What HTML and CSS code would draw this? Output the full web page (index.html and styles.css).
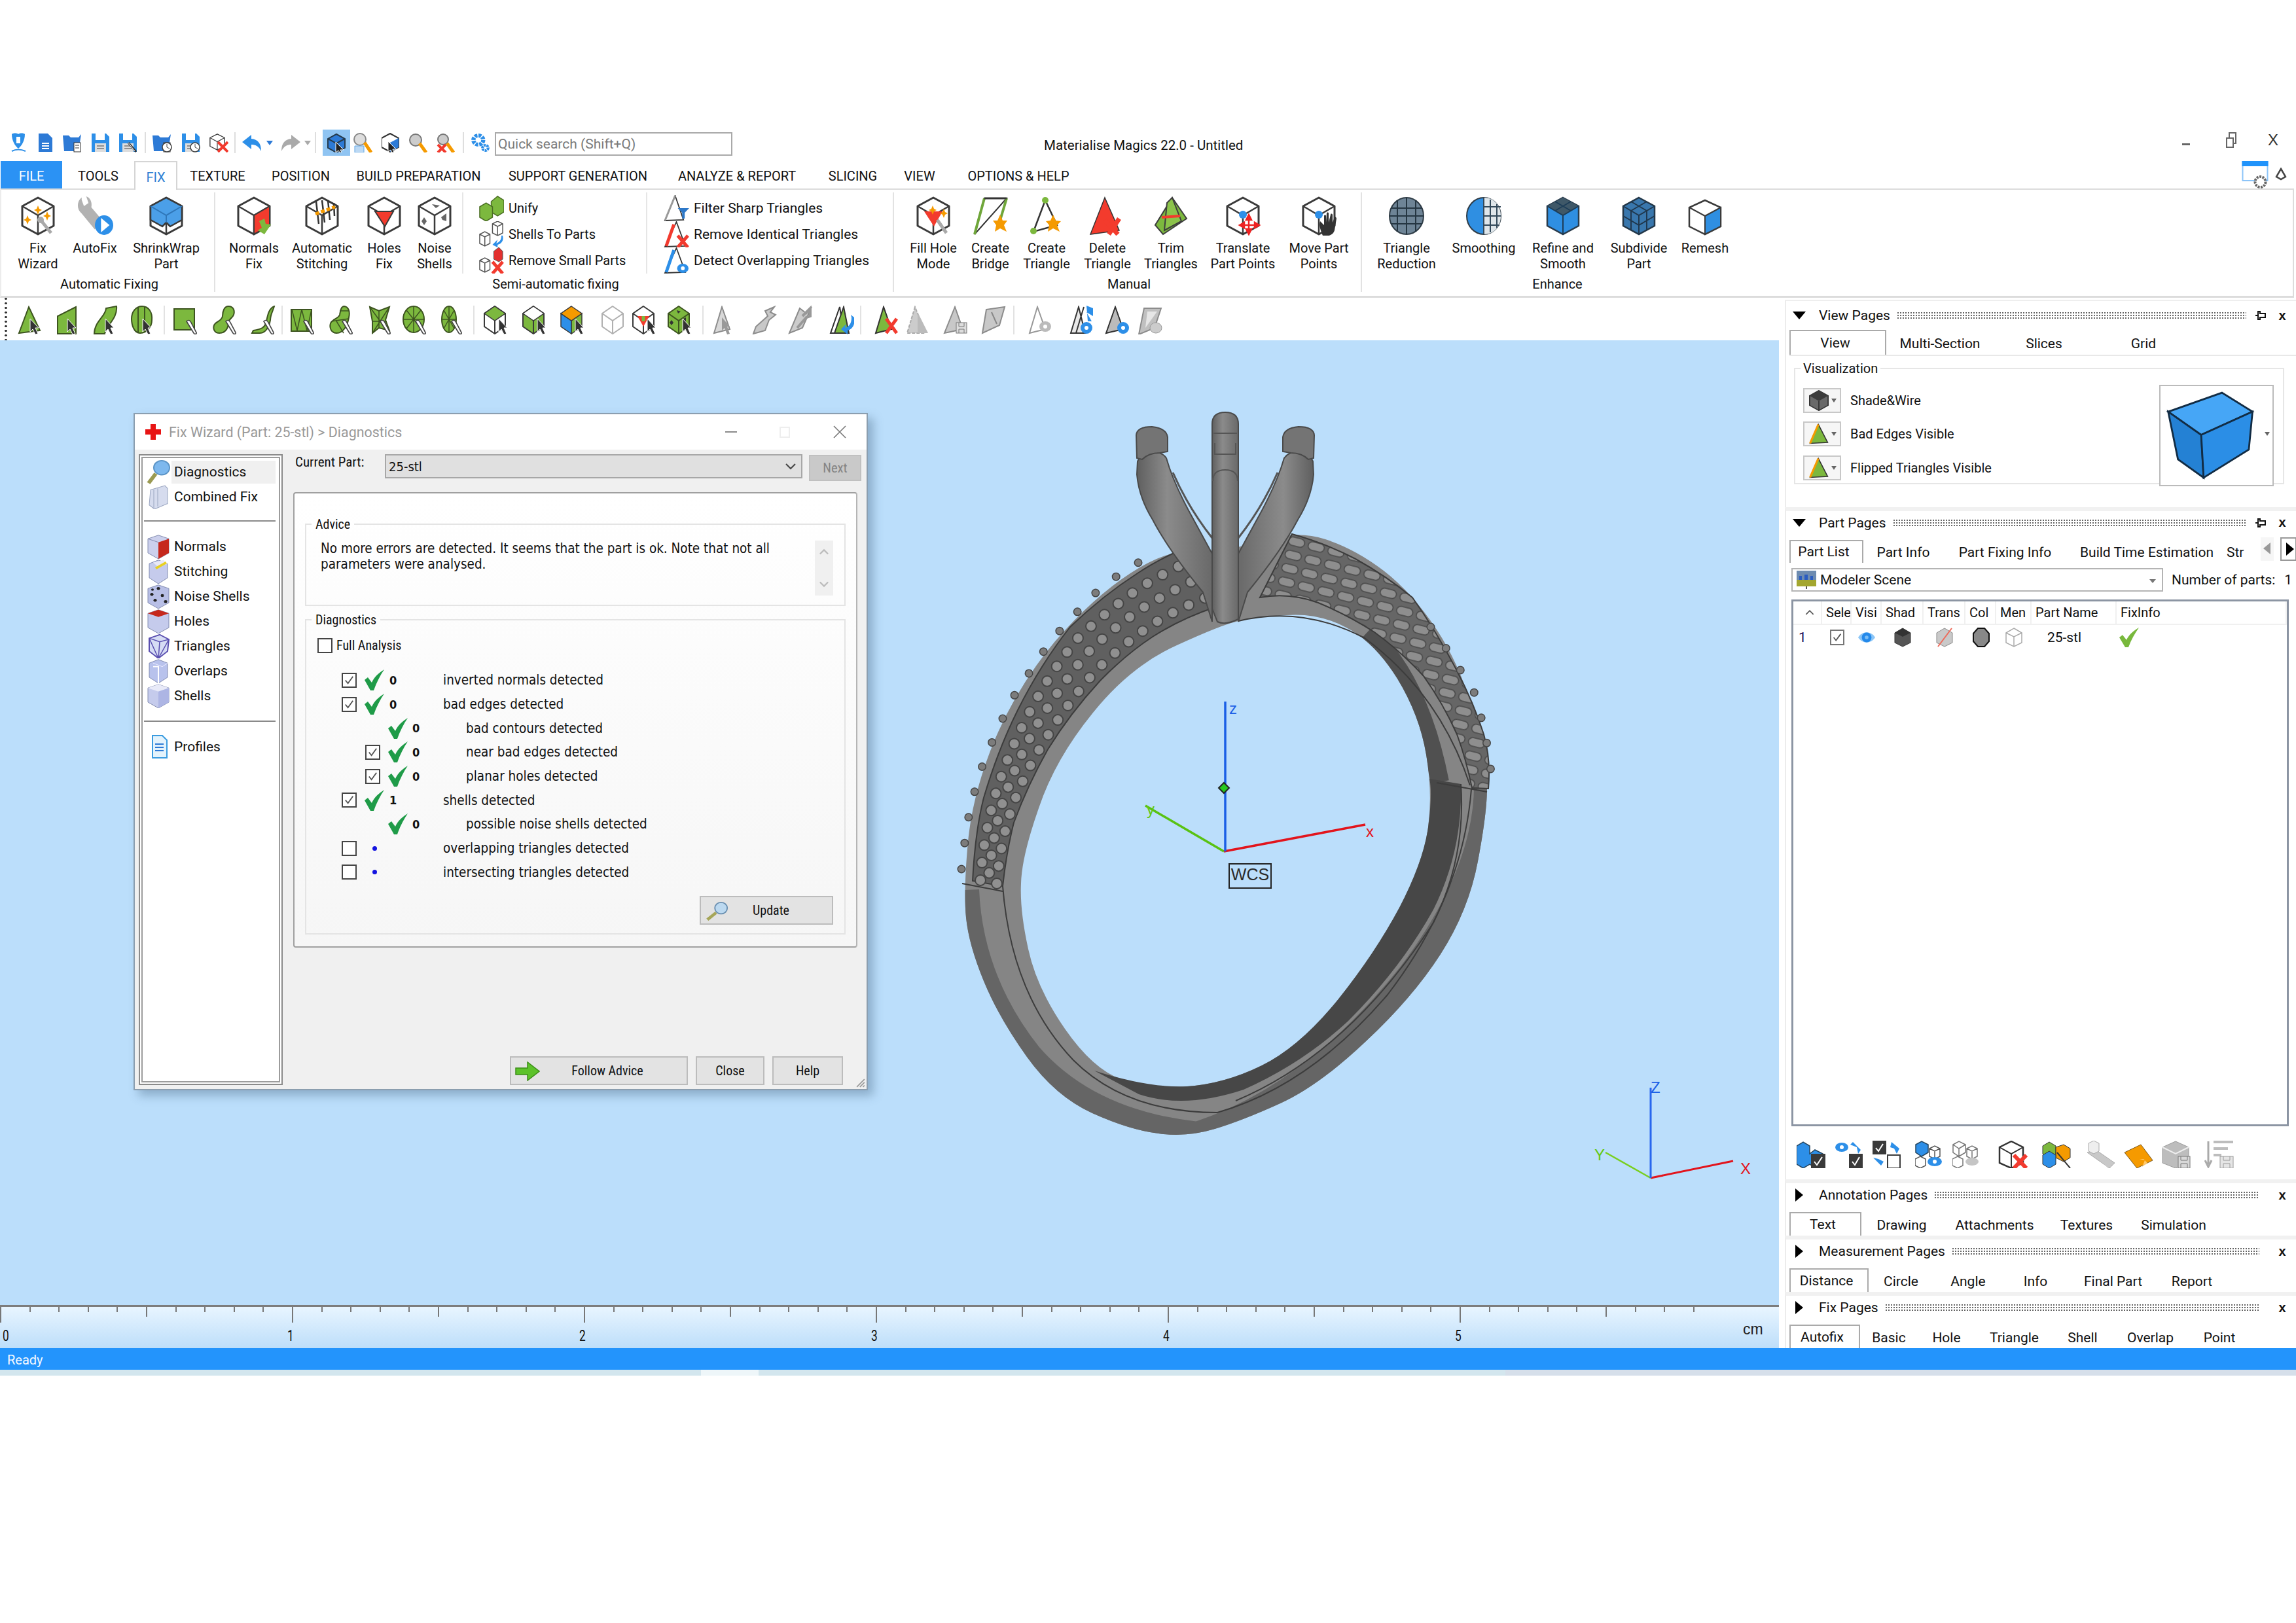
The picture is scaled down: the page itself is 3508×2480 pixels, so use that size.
FILE: index.html
```html
<!DOCTYPE html>
<html lang="en">
<head>
<meta charset="utf-8">
<title>Materialise Magics 22.0 - Untitled</title>
<link rel="stylesheet" href="styles.css">
</head>
<body>
<svg class="sprite" xmlns="http://www.w3.org/2000/svg">
<defs>
<g id="star"><path d="M0-7 2-2 6 0 2 2 0 7-2 2-6 0-2-2Z" fill="#f59a00"/></g>
<symbol id="cube" viewBox="0 0 56 60" preserveAspectRatio="none"><path d="M28 2 52 15V45L28 58 4 45V15Z" fill="#fff" stroke="#3a3a3a" stroke-width="3" stroke-linejoin="round"/><path d="M4 15 28 29 52 15M28 29V58" fill="none" stroke="#3a3a3a" stroke-width="2.5"/></symbol>
<symbol id="wrench" viewBox="0 0 56 60" preserveAspectRatio="none"><path d="M9 2C0 8 0 22 9 28L32 54 46 40 26 18C28 10 24 2 17 0L21 11 13 16 9 6Z" fill="#b2b2b2"/></symbol>
<symbol id="cursor" viewBox="0 0 38 44" preserveAspectRatio="none"><path d="M19 20 32 34 27 34 31 43 27 44 23 36 19 40Z" fill="#333" stroke="#fff" stroke-width="1"/></symbol>
<symbol id="pen" viewBox="0 0 38 44" preserveAspectRatio="none"><path d="M20 24C23 21 26 23 27 26L35 41C36 44 32 44 31 42Z" fill="#fff" stroke="#444" stroke-width="1.6"/></symbol>

<symbol id="b1" viewBox="0 0 56 60" preserveAspectRatio="none"><use href="#cube" width="56" height="60"/><use href="#star" transform="translate(28 21)"/><use href="#star" transform="translate(12 36)"/><use href="#star" transform="translate(42 30)"/><path d="M32 36 48 56" stroke="#a9a9a9" stroke-width="5"/><circle cx="32" cy="36" r="5" fill="#a9a9a9"/></symbol>
<symbol id="b2" viewBox="0 0 60 60" preserveAspectRatio="none"><use href="#wrench" width="52" height="56"/><ellipse cx="45" cy="44" rx="15" ry="15" fill="#2d8fe8"/><path d="M40 33 54 44 40 55Z" fill="#fff"/></symbol>
<symbol id="b3" viewBox="0 0 56 60" preserveAspectRatio="none"><use href="#cube" width="56" height="60"/><path d="M28 2 52 15V36L34 46 28 40 22 46 4 36V15Z" fill="#4b9fe8" stroke="#3a3a3a" stroke-width="2.5" stroke-linejoin="round"/><path d="M4 15 28 29 52 15M28 29V40" fill="none" stroke="#2f76b8" stroke-width="2"/></symbol>
<symbol id="b4" viewBox="0 0 56 60" preserveAspectRatio="none"><use href="#cube" width="56" height="60"/><path d="M28 29 52 15V45L28 58Z" fill="#f33b2d" stroke="#3a3a3a" stroke-width="2"/><path d="M36 38 44 34 46 42 54 43 44 58 34 52 40 48Z" fill="#7cb83e"/></symbol>
<symbol id="b5" viewBox="0 0 56 60" preserveAspectRatio="none"><use href="#cube" width="56" height="60"/><path d="M19 8 23 42M28 6 32 40M37 6 40 36M46 10 47 30" stroke="#333" stroke-width="2.5" fill="none"/><path d="M18 27 48 16" stroke="#f59a00" stroke-width="5" stroke-dasharray="6 3"/></symbol>
<symbol id="b6" viewBox="0 0 56 60" preserveAspectRatio="none"><use href="#cube" width="56" height="60"/><path d="M14 23 42 23 29 46Z" fill="#f33b2d" stroke="#3a3a3a" stroke-width="2"/></symbol>
<symbol id="b7" viewBox="0 0 56 60" preserveAspectRatio="none"><use href="#cube" width="56" height="60"/><path d="M24 12 36 14 30 18ZM38 32 46 26 46 38 40 36ZM12 32 16 38 12 44 8 38Z" fill="#666"/></symbol>
<symbol id="b8" viewBox="0 0 56 60" preserveAspectRatio="none"><use href="#cube" width="56" height="60"/><path d="M14 23 42 23 29 46Z" fill="#f33b2d"/><use href="#star" transform="translate(27 21)"/><use href="#star" transform="translate(44 26)"/><path d="M34 36 48 56" stroke="#a9a9a9" stroke-width="5"/></symbol>
<symbol id="b9" viewBox="0 0 56 60" preserveAspectRatio="none"><path d="M19 3 53 3 4 58Z" fill="#fff" stroke="#333" stroke-width="2"/><path d="M19 3 4 58M53 3 42 40" stroke="#6fa63a" stroke-width="4" fill="none"/><path d="M19 3H53" stroke="#333" stroke-width="3"/><path d="M43 28 47 37 54 37 49 44 53 54 43 49 35 54 37 44 32 37 39 37Z" fill="#f59a00"/></symbol>
<symbol id="b10" viewBox="0 0 56 60" preserveAspectRatio="none"><path d="M26 6 44 44 8 54Z" fill="#fff" stroke="#333" stroke-width="2.5"/><circle cx="26" cy="6" r="5" fill="#7cb83e"/><circle cx="8" cy="53" r="5" fill="#7cb83e"/><path d="M38 28 42 37 50 38 44 44 48 54 38 49 30 54 32 44 27 38 34 37Z" fill="#f59a00"/></symbol>
<symbol id="b11" viewBox="0 0 56 60" preserveAspectRatio="none"><path d="M24 2 46 52 2 58Z" fill="#f33b2d" stroke="#333" stroke-width="1.5"/><path d="M24 36 44 58M46 34 30 58" stroke="#f33b2d" stroke-width="7"/></symbol>
<symbol id="b12" viewBox="0 0 56 60" preserveAspectRatio="none"><path d="M30 2 52 34 16 58 4 44Z" fill="#7cb83e" stroke="#3d3d3d" stroke-width="2"/><path d="M22 10 30 2 44 38 18 52Z" fill="#8bc34a" stroke="#3d3d3d" stroke-width="2"/><path d="M14 32 42 30" stroke="#f33b2d" stroke-width="4"/></symbol>
<symbol id="b13" viewBox="0 0 56 60" preserveAspectRatio="none"><use href="#cube" width="56" height="60"/><ellipse cx="28" cy="28" rx="6" ry="6" fill="#2d8fe8"/><path d="M37 32V56M25 44H52M37 28 33 36H41ZM37 58 33 50H41ZM23 44 30 40V48ZM53 44 46 40V48Z" stroke="#e22" stroke-width="2.5" fill="#e22"/></symbol>
<symbol id="b14" viewBox="0 0 56 60" preserveAspectRatio="none"><use href="#cube" width="56" height="60"/><ellipse cx="28" cy="28" rx="6" ry="6" fill="#2d8fe8"/><path d="M34 60C30 50 28 44 30 38L36 44V30C36 28 39 28 39 30V40L40 26C40 24 43 24 43 26V40L46 28C46 26 49 26 49 29V40L52 32C53 31 55 32 55 34L52 52C50 60 40 62 34 60Z" fill="#333"/></symbol>
<symbol id="e1" viewBox="0 0 56 60" preserveAspectRatio="none"><ellipse cx="28" cy="30" rx="26" ry="28" fill="#6e8496" stroke="#2f3c46" stroke-width="2"/><path d="M4 18H52M2 30H54M4 42H52M14 6V54M28 2V58M42 6V54" stroke="#253642" stroke-width="2" fill="none"/></symbol>
<symbol id="e2" viewBox="0 0 56 60" preserveAspectRatio="none"><ellipse cx="28" cy="30" rx="26" ry="28" fill="#2f8fe2" stroke="#2f3c46" stroke-width="2"/><path d="M28 2C44 2 54 14 54 30S44 58 28 58Z" fill="#dfe6ea"/><path d="M28 16H54M28 30H54M28 44H52M38 5V55M48 12V48M28 2V58" stroke="#33495a" stroke-width="2" fill="none"/></symbol>
<symbol id="e3" viewBox="0 0 56 60" preserveAspectRatio="none"><path d="M28 2 52 15V45L28 58 4 45V15Z" fill="#2f8fe2" stroke="#2a3c4c" stroke-width="2.5"/><path d="M28 2 52 15 28 29 4 15Z" fill="#3f5868"/><path d="M4 15 28 29 52 15M28 29V58M16 8 40 22M40 8 16 22" stroke="#1d3d58" stroke-width="2" fill="none"/></symbol>
<symbol id="e4" viewBox="0 0 56 60" preserveAspectRatio="none"><path d="M28 2 52 15V45L28 58 4 45V15Z" fill="#3977ad" stroke="#233748" stroke-width="2.5"/><path d="M4 15 28 29 52 15M28 29V58M16 8 40 22M40 8 16 22M4 30 28 44 52 30M16 22V51M40 22V51" stroke="#20384e" stroke-width="2" fill="none"/></symbol>
<symbol id="e5" viewBox="0 0 56 60" preserveAspectRatio="none"><path d="M28 6 52 17V46L28 58 4 46V17Z" fill="#fff" stroke="#3a3a3a" stroke-width="2.5"/><path d="M28 30 52 17V46L28 58Z" fill="#2f8fe2" stroke="#3a3a3a" stroke-width="2"/><path d="M4 17 28 30" stroke="#3a3a3a" stroke-width="2"/></symbol>

<symbol id="s1" viewBox="0 0 40 40" preserveAspectRatio="none"><path d="M20 10 30 2 40 8V26L30 32 20 26Z" fill="#7cb83e" stroke="#4a6d24" stroke-width="1.5"/><path d="M2 18 12 12 22 18V34L12 40 2 34Z" fill="#7cb83e" stroke="#4a6d24" stroke-width="1.5"/></symbol>
<symbol id="s2" viewBox="0 0 40 40" preserveAspectRatio="none"><path d="M22 4 30 0 38 4V18L30 22 22 18ZM22 4 30 8 38 4M30 8V22" fill="#fff" stroke="#555" stroke-width="1.5"/><path d="M2 20 10 16 18 20V34L10 38 2 34ZM2 20 10 24 18 20M10 24V38" fill="#fff" stroke="#555" stroke-width="1.5"/><path d="M36 22C36 30 32 32 28 34L30 28 22 36 30 40V36C36 34 40 30 38 22Z" fill="#2d8fe8"/></symbol>
<symbol id="s3" viewBox="0 0 40 40" preserveAspectRatio="none"><path d="M2 20 10 16 18 20V34L10 38 2 34ZM2 20 10 24 18 20M10 24V38" fill="#fff" stroke="#555" stroke-width="1.5"/><path d="M24 6 32 0 38 6V18L32 22 24 18Z" fill="#e3302f" stroke="#555"/><path d="M22 22 38 40M38 22 22 40" stroke="#f23a2e" stroke-width="5"/></symbol>
<symbol id="s4" viewBox="0 0 40 40" preserveAspectRatio="none"><path d="M18 1 31 38 2 39Z" fill="#fff" stroke="#333" stroke-width="1.8"/><path d="M18 1 2 39" stroke="#999" stroke-width="3"/><path d="M22 20H40L33 27V36H29V27Z" fill="#2d78c8"/></symbol>
<symbol id="s5" viewBox="0 0 40 40" preserveAspectRatio="none"><path d="M20 1 34 38 2 39Z" fill="#fff" stroke="#333" stroke-width="1.8"/><path d="M16 5 4 38" stroke="#f23a2e" stroke-width="5"/><path d="M22 22 38 40M38 22 22 40" stroke="#f23a2e" stroke-width="5"/></symbol>
<symbol id="s6" viewBox="0 0 40 40" preserveAspectRatio="none"><path d="M20 1 34 38 2 39Z" fill="#fff" stroke="#333" stroke-width="1.8"/><path d="M16 4 4 38" stroke="#2d8fe8" stroke-width="5"/><ellipse cx="30" cy="32" rx="9" ry="7" fill="#2d8fe8"/><ellipse cx="30" cy="32" rx="3" ry="3" fill="#fff"/></symbol>

<symbol id="t1" viewBox="0 0 38 44" preserveAspectRatio="none"><path d="M17 2 2 42 34 38Z" fill="#7cb83e" stroke="#3d5420" stroke-width="2"/><use href="#cursor" width="38" height="44"/></symbol>
<symbol id="t2" viewBox="0 0 38 44" preserveAspectRatio="none"><path d="M32 2 4 16V43H32Z" fill="#7cb83e" stroke="#3d5420" stroke-width="2"/><use href="#cursor" width="38" height="44"/></symbol>
<symbol id="t3" viewBox="0 0 38 44" preserveAspectRatio="none"><path d="M36 1 20 4C20 16 2 24 2 43H18C20 30 38 20 36 1Z" fill="#7cb83e" stroke="#3d5420" stroke-width="2"/><use href="#cursor" width="38" height="44"/></symbol>
<symbol id="t4" viewBox="0 0 38 44" preserveAspectRatio="none"><path d="M18 1C28 1 34 10 33 22 33 34 24 42 15 42 6 42 2 30 2 20 2 9 9 1 18 1Z" fill="#7cb83e" stroke="#3d5420" stroke-width="2"/><path d="M12 3V42M22 2V41" stroke="#3d5420" stroke-width="2"/><use href="#cursor" width="38" height="44"/></symbol>
<symbol id="t5" viewBox="0 0 38 44" preserveAspectRatio="none"><rect x="1" y="5" width="31" height="32" fill="#7cb83e" stroke="#3d5420" stroke-width="2"/><use href="#pen" width="38" height="44"/></symbol>
<symbol id="t6" viewBox="0 0 38 44" preserveAspectRatio="none"><path d="M24 1C32 1 34 8 32 14 30 20 24 20 24 26 24 36 18 42 10 42 3 42 0 36 2 30 4 24 14 24 15 16 15 8 18 1 24 1Z" fill="#7cb83e" stroke="#3d5420" stroke-width="2"/><use href="#pen" width="38" height="44"/></symbol>
<symbol id="t7" viewBox="0 0 38 44" preserveAspectRatio="none"><path d="M36 1C28 4 26 14 24 24 22 34 16 36 4 38L2 42H14C22 42 28 34 30 22 30 14 34 8 36 1Z" fill="#7cb83e" stroke="#3d5420" stroke-width="2"/><use href="#pen" width="38" height="44"/></symbol>
<symbol id="t8" viewBox="0 0 38 44" preserveAspectRatio="none"><rect x="1" y="6" width="31" height="33" fill="#7cb83e" stroke="#3d5420" stroke-width="2"/><path d="M2 6 10 38 17 6 25 38 32 6" fill="none" stroke="#3d5420" stroke-width="1.5"/><use href="#pen" width="38" height="44"/></symbol>
<symbol id="t9" viewBox="0 0 38 44" preserveAspectRatio="none"><path d="M23 1C30 2 32 10 30 18 28 30 22 42 11 42 3 42 0 34 2 27 5 20 14 20 16 14 17 8 18 1 23 1Z" fill="#7cb83e" stroke="#3d5420" stroke-width="2"/><path d="M4 24 30 20M10 22 22 42M16 8 30 8" stroke="#3d5420" stroke-width="1.5"/><use href="#pen" width="38" height="44"/></symbol>
<symbol id="t10" viewBox="0 0 38 44" preserveAspectRatio="none"><path d="M4 2 18 8 34 2 28 22 34 38 18 34 8 42 8 24Z" fill="#7cb83e" stroke="#3d5420" stroke-width="2"/><path d="M4 2 30 38M34 2 8 42M18 8V34M8 24H30" stroke="#3d5420" stroke-width="1.5"/><use href="#pen" width="38" height="44"/></symbol>
<symbol id="t11" viewBox="0 0 38 44" preserveAspectRatio="none"><ellipse cx="17" cy="21" rx="16" ry="20" fill="#7cb83e" stroke="#3d5420" stroke-width="2"/><path d="M17 1V41M1 21H33M6 7 28 35M28 7 6 35" stroke="#3d5420" stroke-width="1.5"/><use href="#pen" width="38" height="44"/></symbol>
<symbol id="t12" viewBox="0 0 38 44" preserveAspectRatio="none"><ellipse cx="16" cy="21" rx="11" ry="20" fill="#7cb83e" stroke="#3d5420" stroke-width="2"/><path d="M16 1V41M5 21H27M8 7 24 35M24 7 8 35" stroke="#3d5420" stroke-width="1.5"/><use href="#pen" width="38" height="44"/></symbol>
<symbol id="c13" viewBox="0 0 34 44" preserveAspectRatio="none"><path d="M17 1 33 12V32L17 43 1 32V12Z" fill="#fff" stroke="#3a3a3a" stroke-width="2"/><path d="M17 1 33 12 17 23 1 12Z" fill="#7cb83e" stroke="#3a3a3a" stroke-width="1.5"/><path d="M17 23V43" stroke="#3a3a3a" stroke-width="2"/></symbol>
<symbol id="c14" viewBox="0 0 34 44" preserveAspectRatio="none"><path d="M17 1 33 12V32L17 43 1 32V12Z" fill="#7cb83e" stroke="#3a3a3a" stroke-width="2"/><path d="M17 1 33 12 17 23 1 12Z" fill="#fff" stroke="#3a3a3a" stroke-width="1.5"/><path d="M17 23V43" stroke="#3a3a3a" stroke-width="2"/></symbol>
<symbol id="c15" viewBox="0 0 34 44" preserveAspectRatio="none"><path d="M17 23 33 12V32L17 43Z" fill="#7cb83e" stroke="#3a3a3a" stroke-width="1.5"/><path d="M17 23 1 12V32L17 43Z" fill="#2d8fe8" stroke="#3a3a3a" stroke-width="1.5"/><path d="M17 1 33 12 17 23 1 12Z" fill="#f59a00" stroke="#3a3a3a" stroke-width="1.5"/></symbol>
<symbol id="c16" viewBox="0 0 34 44" preserveAspectRatio="none"><path d="M17 1 33 12V32L17 43 1 32V12ZM1 12 17 23 33 12M17 23V43" fill="#fff" stroke="#b0b0b0" stroke-width="2"/></symbol>
<symbol id="c17" viewBox="0 0 34 44" preserveAspectRatio="none"><path d="M17 1 33 12V32L17 43 1 32V12ZM1 12 17 23 33 12M17 23V43" fill="#fff" stroke="#3a3a3a" stroke-width="2"/><path d="M8 16H26L17 32Z" fill="#f33b2d"/><path d="M17 16V24" stroke="#7cb83e" stroke-width="5"/></symbol>
<symbol id="c18" viewBox="0 0 34 44" preserveAspectRatio="none"><path d="M17 1 33 12V32L17 43 1 32V12Z" fill="#7cb83e" stroke="#3d5420" stroke-width="2"/><path d="M1 12 17 23 33 12M17 23V43" fill="none" stroke="#3d5420" stroke-width="2"/><path d="M14 7 20 9 16 12ZM24 20 28 18V26ZM6 22 9 26 6 30 3 26Z" fill="#333"/></symbol>
<symbol id="g1" viewBox="0 0 38 44" preserveAspectRatio="none"><path d="M14 2 2 42 26 36Z" fill="#d8d8d8" stroke="#8c8c8c" stroke-width="2"/><path d="M14 18 26 32 22 32 26 43 22 44 18 34 14 38Z" fill="#999"/></symbol>
<symbol id="g2" viewBox="0 0 38 44" preserveAspectRatio="none"><path d="M34 2 20 8 24 16 6 32 2 43 20 38 26 22 36 14 28 10Z" fill="#c8c8c8" stroke="#8c8c8c" stroke-width="2"/></symbol>
<symbol id="g3" viewBox="0 0 38 44" preserveAspectRatio="none"><path d="M18 4 2 42 22 34 36 2 28 12Z" fill="#ccc" stroke="#8c8c8c" stroke-width="2"/><path d="M22 16 34 4 34 16 28 18 14 34" stroke="#999" stroke-width="4" fill="none"/></symbol>
<symbol id="g4" viewBox="0 0 38 44" preserveAspectRatio="none"><path d="M16 2 2 42H22Z" fill="#fff" stroke="#333" stroke-width="2"/><path d="M22 2 8 42H30Z" fill="#7cb83e" stroke="#333" stroke-width="2"/><path d="M34 18C34 28 30 32 24 34L26 28 18 36 28 44V38C36 36 40 28 38 18L33 14Z" fill="#2d8fe8"/></symbol>
<symbol id="g5" viewBox="0 0 38 44" preserveAspectRatio="none"><path d="M14 2 2 42 26 36Z" fill="#7cb83e" stroke="#333" stroke-width="2"/><path d="M18 20 34 42M34 20 18 42" stroke="#f23a2e" stroke-width="5"/></symbol>
<symbol id="g6" viewBox="0 0 38 44" preserveAspectRatio="none"><path d="M14 2 2 42H30Z" fill="#ccc" stroke="#aaa" stroke-width="2" stroke-dasharray="5 2"/><path d="M18 10 34 42H18Z" fill="#bbb"/></symbol>
<symbol id="g7" viewBox="0 0 38 44" preserveAspectRatio="none"><path d="M18 2 2 42 30 36Z" fill="#c8c8c8" stroke="#8c8c8c" stroke-width="2"/><rect x="20" y="26" width="16" height="16" fill="#ddd" stroke="#777"/><path d="M24 26V32H32V26M24 42V36H32V42" stroke="#777" fill="none"/></symbol>
<symbol id="g8" viewBox="0 0 38 44" preserveAspectRatio="none"><path d="M8 6 36 2 28 30 2 42Z" fill="#c8c8c8" stroke="#8c8c8c" stroke-width="2"/><path d="M16 10 24 28" stroke="#888" stroke-width="2"/></symbol>
<symbol id="g9" viewBox="0 0 38 44" preserveAspectRatio="none"><path d="M14 2 2 42 26 36Z" fill="#fff" stroke="#999" stroke-width="2"/><ellipse cx="26" cy="32" rx="9" ry="8" fill="#bbb"/><ellipse cx="26" cy="32" rx="3" ry="3" fill="#fff"/></symbol>
<symbol id="g10" viewBox="0 0 38 44" preserveAspectRatio="none"><path d="M14 2 2 42H24ZM22 2 10 42" fill="#e8e8e8" stroke="#333" stroke-width="2"/><path d="M26 0 36 4 36 16 26 10 34 24 28 24Z" fill="#2d8fe8"/><ellipse cx="26" cy="34" rx="9" ry="9" fill="#2d8fe8"/><ellipse cx="26" cy="34" rx="3" ry="3" fill="#fff"/></symbol>
<symbol id="g11" viewBox="0 0 38 44" preserveAspectRatio="none"><path d="M16 2 2 42 28 36Z" fill="#bbb" stroke="#333" stroke-width="2"/><ellipse cx="28" cy="34" rx="9" ry="9" fill="#2d8fe8"/><ellipse cx="28" cy="34" rx="3" ry="3" fill="#fff"/></symbol>
<symbol id="g12" viewBox="0 0 38 44" preserveAspectRatio="none"><path d="M10 4 36 4 26 34 2 44Z" fill="#c0c0c0" stroke="#8c8c8c" stroke-width="2"/><path d="M15 9H30L12 34Z" fill="#e6e6e6"/><ellipse cx="28" cy="34" rx="9" ry="8" fill="#ccc" stroke="#999"/></symbol>

<symbol id="q0" viewBox="0 0 26 30" preserveAspectRatio="none"><path d="M3 2C5 0 11 0 13 2 15 0 21 0 23 2 23 12 18 20 13 24 8 20 3 12 3 2Z" fill="#2d8fe8"/><path d="M10 6H16V16H10Z" fill="#fff"/><path d="M3 28C9 25 17 25 24 28" stroke="#2d8fe8" stroke-width="2" fill="none"/></symbol>
<symbol id="q1" viewBox="0 0 23 30" preserveAspectRatio="none"><path d="M1 1H15L22 8V29H1Z" fill="#2d7ad6"/><path d="M6 16H17M6 20H17M6 24H17" stroke="#fff" stroke-width="2"/></symbol>
<symbol id="q2" viewBox="0 0 30 30" preserveAspectRatio="none"><path d="M0 4H9L12 7H24L28 2 24 28H2Z" fill="#2d7ad6"/><rect x="17" y="15" width="10" height="14" fill="#fff" stroke="#333"/><path d="M19 19H25M19 23H25" stroke="#333"/></symbol>
<symbol id="q3" viewBox="0 0 30 30" preserveAspectRatio="none"><path d="M2 1H24L29 6V29H2Z" fill="#2d8fe8"/><rect x="8" y="1" width="14" height="10" fill="#fff"/><rect x="7" y="16" width="17" height="13" fill="#ddd"/><path d="M10 20H21M10 24H21" stroke="#777" stroke-width="1.5"/></symbol>
<symbol id="q4" viewBox="0 0 30 30" preserveAspectRatio="none"><use href="#q3" width="30" height="30"/><path d="M16 15 28 29" stroke="#333" stroke-width="3"/><path d="M16 15 26 28" stroke="#fff" stroke-width="1"/></symbol>
<symbol id="q5" viewBox="0 0 30 30" preserveAspectRatio="none"><use href="#q2" width="30" height="30"/><circle cx="22" cy="22" r="7" fill="#fff" stroke="#444" stroke-width="1.6"/><path d="M22 17V22L26 24" stroke="#444" fill="none"/></symbol>
<symbol id="q6" viewBox="0 0 30 30" preserveAspectRatio="none"><use href="#q3" width="30" height="30"/><circle cx="22" cy="22" r="7" fill="#fff" stroke="#444" stroke-width="1.6"/><path d="M22 17V22L26 24" stroke="#444" fill="none"/></symbol>
<symbol id="q7" viewBox="0 0 30 30" preserveAspectRatio="none"><use href="#cube" width="26" height="26" y="1"/><path d="M14 14 29 29M29 14 14 29" stroke="#f23a2e" stroke-width="4"/></symbol>
<symbol id="undo" viewBox="0 0 30 30" preserveAspectRatio="none"><path d="M14 3 0 14 14 25V18C20 18 25 20 29 28 29 16 24 10 14 9Z" fill="#2d8fe8"/></symbol>
<symbol id="redo" viewBox="0 0 30 30" preserveAspectRatio="none"><path d="M16 3 30 14 16 25V18C10 18 5 20 1 28 1 16 6 10 16 9Z" fill="#aaa"/></symbol>
<symbol id="q8" viewBox="0 0 30 30" preserveAspectRatio="none"><path d="M15 2 28 9V23L15 30 2 23V9Z" fill="#2d7ad6" stroke="#263b4d" stroke-width="2"/><path d="M2 9 15 16 28 9M15 16V30" fill="none" stroke="#263b4d" stroke-width="2"/><path d="M14 14 26 26 21 26 23 30 20 30 18 27 14 30Z" fill="#222" stroke="#fff"/></symbol>
<symbol id="q9" viewBox="0 0 30 30" preserveAspectRatio="none"><circle cx="10" cy="10" r="9" fill="#ddd" stroke="#888" stroke-width="2"/><path d="M17 15 27 30" stroke="#f59a00" stroke-width="5"/><path d="M2 20H16V30H2Z" fill="#bcd9f4" stroke="#5ea6e5"/></symbol>
<symbol id="q10" viewBox="0 0 30 30" preserveAspectRatio="none"><path d="M13 1 26 8V22L13 29 0 22V8Z" fill="#fff" stroke="#333" stroke-width="2"/><path d="M13 15 26 8V22L13 29Z" fill="#2d7ad6"/><path d="M10 13 22 25 17 25 19 30 16 30 14 26 10 29Z" fill="#222" stroke="#fff"/></symbol>
<symbol id="q11" viewBox="0 0 30 30" preserveAspectRatio="none"><circle cx="11" cy="11" r="9" fill="#ccc" stroke="#777" stroke-width="2"/><path d="M17 16 27 30" stroke="#f59a00" stroke-width="5"/></symbol>
<symbol id="q12" viewBox="0 0 30 30" preserveAspectRatio="none"><circle cx="11" cy="10" r="8" fill="#ccc" stroke="#777" stroke-width="2"/><path d="M17 16 27 30" stroke="#f59a00" stroke-width="5"/><path d="M3 18 15 30M15 18 3 30" stroke="#f23a2e" stroke-width="4"/></symbol>
<symbol id="gears" viewBox="0 0 28 30" preserveAspectRatio="none"><circle cx="11" cy="11" r="7" fill="none" stroke="#2d8fe8" stroke-width="6" stroke-dasharray="4 1.5"/><circle cx="21" cy="23" r="4" fill="none" stroke="#2d8fe8" stroke-width="4" stroke-dasharray="3 1"/></symbol>

<symbol id="tick" viewBox="0 0 30 32" preserveAspectRatio="none"><path d="M0 16 5 12 11 20C15 11 22 5 30 0 24 9 18 20 14 32H9Z" fill="#1f9b48"/></symbol>
<symbol id="tick2" viewBox="0 0 30 32" preserveAspectRatio="none"><path d="M0 16 5 12 11 20C15 11 22 5 30 0 24 9 18 20 14 32H9Z" fill="#78b83c"/></symbol>
<symbol id="mark" viewBox="0 0 20 20"><path d="M4 10 8 15 16 4" fill="none" stroke="#555" stroke-width="2"/></symbol>

<symbol id="d-diag" viewBox="0 0 36 42" preserveAspectRatio="none"><circle cx="23" cy="14" r="12" fill="#7db8ee" stroke="#5b94c6" stroke-width="2"/><path d="M14 24 3 40" stroke="#9a9a52" stroke-width="6"/></symbol>
<symbol id="d-comb" viewBox="0 0 36 36" preserveAspectRatio="none"><path d="M6 8 28 2 32 6V28L12 36 4 30Z" fill="#d6dcee" stroke="#9aa5c0"/><path d="M11 8V34M17 6V32" stroke="#9aa5c0"/></symbol>
<symbol id="d-norm" viewBox="0 0 36 42" preserveAspectRatio="none"><path d="M2 8 18 2 34 8V32L18 42 2 32Z" fill="#ccd0ec" stroke="#7e88ad"/><path d="M18 14 34 8V32L18 42Z" fill="#c6281c"/><path d="M2 8 18 14" stroke="#7e88ad"/></symbol>
<symbol id="d-stit" viewBox="0 0 36 42" preserveAspectRatio="none"><path d="M4 8 18 2 32 8V32L18 42 4 32Z" fill="#c5cbec" stroke="#7e88ad"/><path d="M10 6 26 2 32 8 18 14Z" fill="#e8e8f6"/><path d="M14 16 30 6" stroke="#e8d020" stroke-width="4"/></symbol>
<symbol id="d-nois" viewBox="0 0 36 42" preserveAspectRatio="none"><path d="M2 8 18 2 34 8V32L18 42 2 32Z" fill="#b8bfe6" stroke="#7e88ad"/><g fill="#222"><circle cx="18" cy="8" r="2.5"/><circle cx="8" cy="18" r="2.5"/><circle cx="13" cy="28" r="2.5"/><circle cx="24" cy="20" r="2.5"/><circle cx="29" cy="30" r="2.5"/><circle cx="9" cy="10" r="2"/></g></symbol>
<symbol id="d-hole" viewBox="0 0 36 42" preserveAspectRatio="none"><path d="M2 8 18 2 34 8V32L18 42 2 32Z" fill="#c5cbec" stroke="#7e88ad"/><path d="M2 8 18 2 34 8 18 14Z" fill="#c6281c"/></symbol>
<symbol id="d-tri" viewBox="0 0 36 42" preserveAspectRatio="none"><path d="M4 8 20 2 34 10 32 30 18 42 4 30Z" fill="#d6dcf4" stroke="#5a4fb0" stroke-width="2"/><path d="M4 8 18 42 20 14M34 10 18 42M4 8 20 14 34 10" fill="none" stroke="#5a4fb0" stroke-width="1.5"/></symbol>
<symbol id="d-over" viewBox="0 0 36 42" preserveAspectRatio="none"><path d="M4 8 18 2 32 8V32L18 42 4 32Z" fill="#b8c2ec" stroke="#7e88ad"/><path d="M10 8 24 14 32 8" fill="none" stroke="#eef"/><path d="M10 14H18V42" fill="none" stroke="#fff" stroke-width="2"/></symbol>
<symbol id="d-shel" viewBox="0 0 36 42" preserveAspectRatio="none"><path d="M2 8 18 2 34 8V32L18 42 2 32Z" fill="#c5cbec" stroke="#7e88ad"/><path d="M2 8 18 14 34 8 18 2Z" fill="#e8eaf8"/><path d="M18 14 34 8V32L18 42Z" fill="#adb5e4"/></symbol>
<symbol id="d-prof" viewBox="0 0 24 36" preserveAspectRatio="none"><path d="M1 1H16L23 8V35H1Z" fill="#e4f3fc" stroke="#3b9ce0" stroke-width="2"/><path d="M5 14H18M5 19H18M5 24H18" stroke="#2d7ad6" stroke-width="2"/></symbol>
<symbol id="d-arrow" viewBox="0 0 38 30" preserveAspectRatio="none"><path d="M1 10H19V1L37 15 19 29V20H1Z" fill="#5cc22a" stroke="#3b8f17" stroke-width="1.5"/></symbol>
<symbol id="d-mag" viewBox="0 0 40 34" preserveAspectRatio="none"><circle cx="26" cy="12" r="10" fill="#bcd9f0" stroke="#6a8fb0" stroke-width="2"/><path d="M18 20 4 32" stroke="#a6a659" stroke-width="5"/></symbol>

<symbol id="v1" viewBox="0 0 34 44" preserveAspectRatio="none"><path d="M17 1 33 12V32L17 43 1 32V12Z" fill="#6a6a6a" stroke="#333" stroke-width="2"/><path d="M17 1 33 12 17 23 1 12Z" fill="#3c3c3c"/><path d="M17 23V43" stroke="#333" stroke-width="2"/></symbol>
<symbol id="v2" viewBox="0 0 38 44" preserveAspectRatio="none"><path d="M18 2 2 42 36 40Z" fill="#7cb83e" stroke="#333" stroke-width="2"/><path d="M18 2 2 42" stroke="#f59a00" stroke-width="4"/></symbol>

<symbol id="p1" viewBox="0 0 45 42" preserveAspectRatio="none"><path d="M0 8 10 2 20 8V20L28 14 40 20V36L30 42 20 36 10 42 0 36Z" fill="#2d8fe8" stroke="#26465f" stroke-width="1.5"/><rect x="22" y="20" width="22" height="22" fill="#3a3a3a"/><path d="M27 32 31 37 39 25" fill="none" stroke="#fff" stroke-width="2"/></symbol>
<symbol id="p2" viewBox="0 0 45 42" preserveAspectRatio="none"><ellipse cx="11" cy="10" rx="10" ry="7" fill="#2d8fe8"/><circle cx="11" cy="10" r="3" fill="#fff"/><path d="M28 2 40 14 36 20 34 10 24 6Z" fill="#2d8fe8"/><rect x="22" y="20" width="21" height="22" fill="#3a3a3a"/><path d="M27 32 31 37 38 25" fill="none" stroke="#fff" stroke-width="2"/></symbol>
<symbol id="p3" viewBox="0 0 45 42" preserveAspectRatio="none"><rect x="1" y="0" width="21" height="21" fill="#3a3a3a"/><path d="M6 11 10 16 17 5" fill="none" stroke="#fff" stroke-width="2"/><path d="M30 2 42 12 38 20 34 12 28 10Z" fill="#2d8fe8"/><path d="M2 26 14 38 18 32 10 28Z" fill="#2d8fe8"/><rect x="24" y="22" width="19" height="20" fill="#fff" stroke="#3a3a3a" stroke-width="2"/></symbol>
<symbol id="p4" viewBox="0 0 45 42" preserveAspectRatio="none"><path d="M22 12 30 8 38 12V24L30 28 22 24ZM22 12 30 16 38 12M30 16V28M0 28 8 24 16 28V38L8 42 0 38Z" fill="#fff" stroke="#555" stroke-width="1.5"/><path d="M1 6 10 1 20 6V18L10 24 1 18Z" fill="#2d8fe8" stroke="#26465f" stroke-width="1.5"/><ellipse cx="30" cy="32" rx="11" ry="7" fill="#2d8fe8"/><circle cx="30" cy="32" r="3" fill="#fff"/></symbol>
<symbol id="p5" viewBox="0 0 45 42" preserveAspectRatio="none"><path d="M22 12 30 8 38 12V24L30 28 22 24ZM22 12 30 16 38 12M30 16V28M0 28 8 24 16 28V38L8 42 0 38ZM1 6 10 1 20 6V18L10 24 1 18ZM1 6 10 12 20 6M10 12V24" fill="#fff" stroke="#777" stroke-width="1.5"/><ellipse cx="30" cy="32" rx="10" ry="6" fill="#c5c5c5"/></symbol>
<symbol id="p6" viewBox="0 0 45 42" preserveAspectRatio="none"><path d="M20 1 38 10V34L20 42 2 34V10Z" fill="#fff" stroke="#333" stroke-width="2.5"/><path d="M2 10 20 20 38 10M20 20V42" fill="none" stroke="#333" stroke-width="2"/><path d="M24 22 43 42M43 22 24 42" stroke="#f23a2e" stroke-width="6"/></symbol>
<symbol id="p7" viewBox="0 0 45 42" preserveAspectRatio="none"><path d="M2 8 12 2 22 8V20L12 26 2 20Z" fill="#7cb83e" stroke="#333"/><path d="M22 10 34 6 44 12V26L34 32 22 26Z" fill="#f59a00" stroke="#333"/><path d="M2 22 12 16 22 22V36L12 42 2 36Z" fill="#2d8fe8" stroke="#333"/><path d="M24 18 44 42" stroke="#333" stroke-width="2"/></symbol>
<symbol id="p8" viewBox="0 0 45 42" preserveAspectRatio="none"><path d="M18 16 44 34 36 42 2 18Z" fill="#c8c8c8" stroke="#aaa"/><path d="M4 4 12 0 20 4V16L12 20 4 16Z" fill="#eee" stroke="#aaa"/><path d="M26 34 34 28V42Z" fill="#c8c8c8"/></symbol>
<symbol id="p9" viewBox="0 0 45 42" preserveAspectRatio="none"><path d="M1 18 26 6 44 30 20 42Z" fill="#f59a00" stroke="#7a5a20"/><path d="M24 28 32 30 28 40 36 34 30 28" fill="#ffc96b"/></symbol>
<symbol id="p10" viewBox="0 0 45 42" preserveAspectRatio="none"><path d="M22 1 42 10V34L22 42 2 34V10Z" fill="#bdbdbd" stroke="#999"/><path d="M2 10 22 20 42 10" fill="none" stroke="#eee" stroke-width="2"/><rect x="26" y="24" width="18" height="18" fill="#d8d8d8" stroke="#777"/><path d="M30 24V30H40V24M30 42V35H40V42" fill="none" stroke="#777"/></symbol>
<symbol id="p11" viewBox="0 0 45 42" preserveAspectRatio="none"><path d="M6 1V36M1 30 6 40 11 30" fill="none" stroke="#aaa" stroke-width="3"/><path d="M14 2H44M14 12H36M14 22H26" stroke="#bdbdbd" stroke-width="4"/><rect x="24" y="24" width="20" height="18" fill="#e5e5e5" stroke="#999"/><path d="M29 24V30H39V24M29 42V35H39V42" fill="none" stroke="#999"/></symbol>
</defs>
</svg>

<div class="app">
  <div class="titlebar">
    <div class="qat">
      <span class="qi"><svg class="ic"><use href="#q0"/></svg></span>
      <span class="qi"><svg class="ic"><use href="#q1"/></svg></span>
      <span class="qi"><svg class="ic"><use href="#q2"/></svg></span>
      <span class="qi"><svg class="ic"><use href="#q3"/></svg></span>
      <span class="qi sep"><svg class="ic"><use href="#q4"/></svg></span>
      <span class="qi"><svg class="ic"><use href="#q5"/></svg></span>
      <span class="qi"><svg class="ic"><use href="#q6"/></svg></span>
      <span class="qi sep"><svg class="ic"><use href="#q7"/></svg></span>
      <span class="qi"><svg class="ic"><use href="#undo"/></svg></span>
      <span class="qi"><span class="dd dd-blue"></span></span>
      <span class="qi"><svg class="ic"><use href="#redo"/></svg></span>
      <span class="qi sep"><span class="dd"></span></span>
      <span class="qi"><span class="hot"><svg class="ic"><use href="#q8"/></svg></span></span>
      <span class="qi"><svg class="ic"><use href="#q9"/></svg></span>
      <span class="qi"><svg class="ic"><use href="#q10"/></svg></span>
      <span class="qi"><svg class="ic"><use href="#q11"/></svg></span>
      <span class="qi sep"><svg class="ic"><use href="#q12"/></svg></span>
      <span class="qi"><svg class="ic"><use href="#gears"/></svg></span>
      <span class="search">Quick search (Shift+Q)</span>
    </div>
    <div class="apptitle">Materialise Magics 22.0 - Untitled</div>
    <div class="winbtns"><span class="w-min"></span><span class="w-res"><i></i><b></b></span><span class="w-x">X</span></div>
  </div>

  <div class="tabs">
    <span class="tab file">FILE</span><span class="tab">TOOLS</span><span class="tab active">FIX</span><span class="tab">TEXTURE</span><span class="tab">POSITION</span><span class="tab">BUILD PREPARATION</span><span class="tab">SUPPORT GENERATION</span><span class="tab">ANALYZE &amp; REPORT</span><span class="tab">SLICING</span><span class="tab">VIEW</span><span class="tab">OPTIONS &amp; HELP</span>
    <span class="tabtools">
      <span class="winset"><svg viewBox="0 0 40 44"><path d="M1 1H39V30H1Z" fill="#fff" stroke="#8cc4f8" stroke-width="2"/><rect width="40" height="8" fill="#2093fb"/><circle cx="28" cy="32" r="8" fill="#fff" stroke="#666" stroke-width="4" stroke-dasharray="3 1.5"/></svg></span>
      <svg class="collapse" viewBox="0 0 18 20"><path d="M9 2 16 14 9 18 2 14Z" fill="none" stroke="#444" stroke-width="2.5"/></svg>
    </span>
  </div>

  <div class="ribbon">
    <section class="rg g1">
      <div class="rg-body bigs">
        <div class="big"><svg class="bi"><use href="#b1"/></svg><span>Fix<br>Wizard</span></div>
        <div class="big"><svg class="bi"><use href="#b2"/></svg><span>AutoFix</span></div>
        <div class="big"><svg class="bi"><use href="#b3"/></svg><span>ShrinkWrap<br>Part</span></div>
      </div>
      <div class="rg-label">Automatic Fixing</div>
    </section>
    <section class="rg g2">
      <div class="rg-body">
        <div class="bigs g2b">
          <div class="big"><svg class="bi"><use href="#b4"/></svg><span>Normals<br>Fix</span></div>
          <div class="big"><svg class="bi"><use href="#b5"/></svg><span>Automatic<br>Stitching</span></div>
          <div class="big"><svg class="bi"><use href="#b6"/></svg><span>Holes<br>Fix</span></div>
          <div class="big"><svg class="bi"><use href="#b7"/></svg><span>Noise<br>Shells</span></div>
        </div>
        <div class="smalls s-a">
          <div class="small"><svg class="si"><use href="#s1"/></svg>Unify</div>
          <div class="small"><svg class="si"><use href="#s2"/></svg>Shells To Parts</div>
          <div class="small"><svg class="si"><use href="#s3"/></svg>Remove Small Parts</div>
        </div>
        <div class="smalls s-b">
          <div class="small"><svg class="si"><use href="#s4"/></svg>Filter Sharp Triangles</div>
          <div class="small"><svg class="si"><use href="#s5"/></svg>Remove Identical Triangles</div>
          <div class="small"><svg class="si"><use href="#s6"/></svg>Detect Overlapping Triangles</div>
        </div>
      </div>
      <div class="rg-label">Semi-automatic fixing</div>
    </section>
    <section class="rg g3">
      <div class="rg-body bigs">
        <div class="big"><svg class="bi"><use href="#b8"/></svg><span>Fill Hole<br>Mode</span></div>
        <div class="big"><svg class="bi"><use href="#b9"/></svg><span>Create<br>Bridge</span></div>
        <div class="big"><svg class="bi"><use href="#b10"/></svg><span>Create<br>Triangle</span></div>
        <div class="big"><svg class="bi"><use href="#b11"/></svg><span>Delete<br>Triangle</span></div>
        <div class="big"><svg class="bi"><use href="#b12"/></svg><span>Trim<br>Triangles</span></div>
        <div class="big"><svg class="bi"><use href="#b13"/></svg><span>Translate<br>Part Points</span></div>
        <div class="big"><svg class="bi"><use href="#b14"/></svg><span>Move Part<br>Points</span></div>
      </div>
      <div class="rg-label">Manual</div>
    </section>
    <section class="rg g4">
      <div class="rg-body bigs">
        <div class="big"><svg class="bi"><use href="#e1"/></svg><span>Triangle<br>Reduction</span></div>
        <div class="big"><svg class="bi"><use href="#e2"/></svg><span>Smoothing</span></div>
        <div class="big"><svg class="bi"><use href="#e3"/></svg><span>Refine and<br>Smooth</span></div>
        <div class="big"><svg class="bi"><use href="#e4"/></svg><span>Subdivide<br>Part</span></div>
        <div class="big"><svg class="bi"><use href="#e5"/></svg><span>Remesh</span></div>
      </div>
      <div class="rg-label">Enhance</div>
    </section>
  </div>

  <div class="main">
    <div class="center">
      <div class="toolbar">
        <svg class="ti"><use href="#t1"/></svg><svg class="ti"><use href="#t2"/></svg><svg class="ti"><use href="#t3"/></svg><svg class="ti"><use href="#t4"/></svg><svg class="ti"><use href="#t5"/></svg><svg class="ti"><use href="#t6"/></svg><svg class="ti"><use href="#t7"/></svg><svg class="ti"><use href="#t8"/></svg><svg class="ti"><use href="#t9"/></svg><svg class="ti"><use href="#t10"/></svg><svg class="ti"><use href="#t11"/></svg><svg class="ti"><use href="#t12"/></svg>
        <span class="tc"><svg class="ti"><use href="#c13"/></svg><svg class="ti"><use href="#cursor"/></svg></span><span class="tc"><svg class="ti"><use href="#c14"/></svg><svg class="ti"><use href="#cursor"/></svg></span><span class="tc"><svg class="ti"><use href="#c15"/></svg><svg class="ti"><use href="#cursor"/></svg></span><span class="tc"><svg class="ti"><use href="#c16"/></svg></span><span class="tc"><svg class="ti"><use href="#c17"/></svg><svg class="ti"><use href="#cursor"/></svg></span><span class="tc"><svg class="ti"><use href="#c18"/></svg><svg class="ti"><use href="#cursor"/></svg></span>
        <svg class="ti"><use href="#g1"/></svg><svg class="ti"><use href="#g2"/></svg><svg class="ti"><use href="#g3"/></svg><svg class="ti"><use href="#g4"/></svg><svg class="ti"><use href="#g5"/></svg><svg class="ti"><use href="#g6"/></svg><svg class="ti"><use href="#g7"/></svg><svg class="ti"><use href="#g8"/></svg><svg class="ti"><use href="#g9"/></svg><svg class="ti"><use href="#g10"/></svg><svg class="ti"><use href="#g11"/></svg><svg class="ti"><use href="#g12"/></svg>
      </div>
      <div class="viewport">
        <svg class="scene" viewBox="0 520 2718 1474" xmlns="http://www.w3.org/2000/svg">
          <defs>
            <clipPath id="ringclip"><path clip-rule="evenodd" d="M1924 827Q1868 845 1826 842Q1784 839 1727 876Q1670 913 1612 980Q1555 1048 1520 1130Q1486 1212 1479 1286Q1472 1361 1476 1402Q1480 1443 1503 1499Q1526 1555 1569 1615Q1612 1675 1669 1701Q1727 1727 1770 1732Q1813 1738 1856 1725Q1899 1712 1956 1686Q2014 1660 2086 1592Q2158 1525 2201 1458Q2244 1391 2258 1316Q2272 1242 2272 1204Q2272 1167 2252 1092Q2232 1018 2195 962Q2158 906 2114 872Q2071 839 2025 824Q1980 809 1924 827ZM1892 949Q1868 954 1798 986Q1727 1018 1670 1089Q1612 1160 1587 1235Q1561 1309 1560 1350Q1558 1391 1571 1450Q1584 1510 1627 1572Q1670 1634 1713 1649Q1756 1663 1814 1660Q1871 1656 1928 1628Q1985 1600 2043 1529Q2100 1458 2138 1387Q2175 1316 2182 1264Q2189 1212 2179 1153Q2169 1093 2135 1037Q2100 981 2057 959Q2014 936 1965 940Q1916 943 1892 949Z"/></clipPath>
            <pattern id="caps" width="31" height="21" patternUnits="userSpaceOnUse" patternTransform="rotate(14)"><rect width="31" height="21" fill="#666"/><rect x="2" y="3" width="25" height="13" rx="6.5" fill="#8e8e8e" stroke="#484848" stroke-width="1.5"/></pattern>
            <linearGradient id="pg" x1="0" x2="1" y1="0" y2="0"><stop offset="0" stop-color="#5f5f5f"/><stop offset=".4" stop-color="#8b8b8b"/><stop offset="1" stop-color="#696969"/></linearGradient>
            <path id="rowO" d="M1469 1328Q1472 1305 1474 1287Q1476 1265 1480 1248Q1484 1228 1489 1210Q1494 1190 1500 1173Q1507 1153 1515 1136Q1523 1116 1532 1098Q1540 1080 1549 1064Q1560 1046 1572 1029Q1583 1012 1594 996Q1606 980 1619 964Q1633 948 1647 934Q1660 920 1674 906Q1689 893 1704 882Q1720 871 1737 861Q1755 850 1773 840"/>
            <path id="rowR" d="M2186 958Q2210 990 2232 1025Q2245 1045 2255 1063Q2262 1090 2267 1115Q2272 1135 2275 1156Q2278 1172 2278 1190"/>
            <path id="rowA" d="M1498 1345Q1502 1285 1517 1228Q1535 1162 1568 1098Q1602 1030 1647 975Q1695 930 1745 896Q1780 875 1812 860"/>
            <path id="rowB" d="M1510 1348Q1515 1290 1528 1238Q1548 1175 1580 1115Q1615 1055 1660 999Q1705 955 1752 925Q1790 903 1828 885"/>
            <path id="rowC" d="M1523 1350Q1527 1300 1541 1250Q1560 1190 1594 1135Q1630 1075 1674 1025Q1715 985 1759 955Q1800 930 1845 912"/>
            <g id="prongleft">
              <path d="M1738 705Q1745 690 1760 690Q1775 690 1782 700Q1792 735 1816 780L1852 846V950L1838 905Q1785 840 1761 794Q1740 760 1737 725Z" fill="url(#pg)" stroke="#4a4a4a" stroke-width="2"/>
              <path d="M1792 722Q1815 775 1852 822" fill="none" stroke="#555" stroke-width="3"/>
              <path d="M1736 665Q1737 652 1760 652Q1782 654 1784 668V690L1772 692Q1755 692 1745 702L1737 700Z" fill="#747474" stroke="#4a4a4a" stroke-width="2"/>
            </g>
          </defs>
          <path clip-path="url(#ringclip)" d="M1400 780H2320V1780H1400Z" fill="#858585"/>
          <g clip-path="url(#ringclip)" fill="none">
            <path d="M1472 1360Q1478 1500 1569 1615Q1660 1720 1830 1738Q2010 1680 2160 1490Q2280 1330 2276 1190" stroke="#656565" stroke-width="48"/>
            <path d="M2090 965Q2170 1040 2200 1195" stroke="#505050" stroke-width="28"/>
          </g>
          <path d="M1672 1636Q1756 1663 1814 1660Q1871 1656 1928 1628Q1985 1600 2043 1529Q2100 1458 2138 1387Q2175 1316 2182 1264Q2189 1212 2184 1190L2232 1198Q2235 1300 2190 1390Q2140 1480 2060 1560Q1990 1625 1900 1665Q1810 1695 1740 1672Z" fill="#474747"/>
          <path d="M1486 1346Q1490 1270 1503 1219Q1525 1145 1555 1085Q1590 1015 1635 958Q1685 910 1738 876Q1765 858 1800 842L1856 928Q1805 945 1761 973Q1720 1000 1681 1040Q1635 1090 1601 1145Q1570 1200 1549 1257Q1538 1300 1532 1354Z" fill="#606060" stroke="#3c3c3c" stroke-width="2"/>
          <path d="M1974 816Q2025 830 2071 854Q2118 880 2158 913Q2195 965 2226 1025Q2252 1075 2267 1122Q2278 1160 2274 1205L2249 1204Q2240 1160 2226 1122Q2205 1075 2175 1033Q2140 995 2100 966Q2060 940 2014 921Q1970 905 1925 913Z" fill="url(#caps)" stroke="#3c3c3c" stroke-width="2"/>
          <g class="beads b-out"><use href="#rowO" class="bd"/><use href="#rowO" class="bl"/><use href="#rowR" class="bd"/><use href="#rowR" class="bl"/></g>
          <g class="beads"><use href="#rowA" class="bd"/><use href="#rowA" class="bl"/><use href="#rowB" class="bd bs"/><use href="#rowB" class="bl bs"/><use href="#rowC" class="bd"/><use href="#rowC" class="bl"/></g>
          <g fill="none" stroke="#3c3c3c" stroke-width="2">
            <path d="M1532 1354Q1545 1520 1640 1620Q1720 1700 1860 1700"/>
            <path d="M1860 1700Q2000 1660 2120 1520Q2235 1370 2248 1206"/>
            <path d="M1888 1682Q2060 1610 2190 1410Q2240 1310 2232 1198"/>
            <path d="M1470 1350 1532 1362"/>
            <path d="M2195 1196 2272 1210"/>
            <path d="M1892 949Q1990 925 2085 975Q2200 1060 2246 1200"/>
          </g>
          <use href="#prongleft"/>
          <use href="#prongleft" transform="translate(3744 0) scale(-1 1)"/>
          <path d="M1852 648Q1852 630 1872 630Q1892 630 1892 648V946Q1872 956 1860 950L1852 930Z" fill="url(#pg)" stroke="#4a4a4a" stroke-width="2"/>
          <path d="M1854 662H1890M1856 677V694H1888V677" fill="none" stroke="#555" stroke-width="2"/>
          <path d="M1853 735Q1853 718 1872 718Q1891 718 1891 735" fill="none" stroke="#555" stroke-width="2"/>
          <path d="M1870 1301 1750 1231" stroke="#59c212" stroke-width="3.5"/>
          <path d="M1870 1301 2086 1260" stroke="#e2141c" stroke-width="3.5"/>
          <path d="M1872 1301V1072" stroke="#1b5fe6" stroke-width="3.5"/>
          <path d="M1870 1196 1878 1204 1870 1212 1862 1204Z" fill="#28c81e" stroke="#222" stroke-width="2"/>
          <text x="1878" y="1091" class="ax ax-z">z</text>
          <text x="1752" y="1245" class="ax ax-y">y</text>
          <text x="2087" y="1279" class="ax ax-x">x</text>
          <rect x="1878" y="1320" width="64" height="37" fill="#bbdefb" stroke="#222" stroke-width="2"/>
          <text x="1910" y="1345" class="wcs">WCS</text>
          <path d="M2522 1800 2453 1761" stroke="#79cf1e" stroke-width="2.5"/>
          <path d="M2522 1800 2648 1774" stroke="#e2141c" stroke-width="3"/>
          <path d="M2522 1800V1662" stroke="#2867ee" stroke-width="3"/>
          <text x="2522" y="1670" class="ax2 ax-z">Z</text>
          <text x="2436" y="1773" class="ax2 ax-y">Y</text>
          <text x="2659" y="1794" class="ax2 ax-x">X</text>
        </svg>

        <div class="dialog">
          <div class="dlg-title">
            <svg class="dlg-cross" viewBox="0 0 26 26"><path d="M9 1H17V9H25V17H17V25H9V17H1V9H9Z" fill="#e81414"/></svg>
            <span class="dlg-name">Fix Wizard (Part: 25-stl) &gt; Diagnostics</span>
            <span class="d-min"></span><span class="d-max"></span>
            <svg class="d-x" viewBox="0 0 20 20"><path d="M1 1 19 19M19 1 1 19" stroke="#777" stroke-width="1.6"/></svg>
          </div>
          <div class="dlg-body">
            <nav class="steps">
              <div class="step sel"><svg class="sti"><use href="#d-diag"/></svg><span>Diagnostics</span></div>
              <div class="step"><svg class="sti"><use href="#d-comb"/></svg><span>Combined Fix</span></div>
              <hr class="stepsep">
              <div class="step"><svg class="sti"><use href="#d-norm"/></svg><span>Normals</span></div>
              <div class="step"><svg class="sti"><use href="#d-stit"/></svg><span>Stitching</span></div>
              <div class="step"><svg class="sti"><use href="#d-nois"/></svg><span>Noise Shells</span></div>
              <div class="step"><svg class="sti"><use href="#d-hole"/></svg><span>Holes</span></div>
              <div class="step"><svg class="sti"><use href="#d-tri"/></svg><span>Triangles</span></div>
              <div class="step"><svg class="sti"><use href="#d-over"/></svg><span>Overlaps</span></div>
              <div class="step"><svg class="sti"><use href="#d-shel"/></svg><span>Shells</span></div>
              <hr class="stepsep s2">
              <div class="step prof"><svg class="sti pr"><use href="#d-prof"/></svg><span>Profiles</span></div>
            </nav>
            <div class="dlg-main">
              <div class="partrow">
                <span class="partlabel">Current Part:</span>
                <span class="partcombo"><span>25-stl</span><svg viewBox="0 0 16 10"><path d="M1 1 8 8 15 1" fill="none" stroke="#444" stroke-width="2"/></svg></span>
                <span class="nextbtn">Next</span>
              </div>
              <div class="panel">
                <fieldset class="box advice">
                  <legend>Advice</legend>
                  <p>No more errors are detected. It seems that the part is ok. Note that not all<br>parameters were analysed.</p>
                  <div class="vscroll"><svg viewBox="0 0 16 10"><path d="M1 9 8 2 15 9" fill="none" stroke="#bbb" stroke-width="2.5"/></svg><svg viewBox="0 0 16 10"><path d="M1 1 8 8 15 1" fill="none" stroke="#bbb" stroke-width="2.5"/></svg></div>
                </fieldset>
                <fieldset class="box diag">
                  <legend>Diagnostics</legend>
                  <label class="full"><span class="cb"></span>Full Analysis</label>
                  <div class="rows">
                    <div class="drow"><span class="cb on"><svg><use href="#mark"/></svg></span><svg class="tk"><use href="#tick"/></svg><b>0</b><span>inverted normals detected</span></div>
                    <div class="drow"><span class="cb on"><svg><use href="#mark"/></svg></span><svg class="tk"><use href="#tick"/></svg><b>0</b><span>bad edges detected</span></div>
                    <div class="drow ind"><span></span><svg class="tk"><use href="#tick"/></svg><b>0</b><span>bad contours detected</span></div>
                    <div class="drow ind"><span class="cb on"><svg><use href="#mark"/></svg></span><svg class="tk"><use href="#tick"/></svg><b>0</b><span>near bad edges detected</span></div>
                    <div class="drow ind"><span class="cb on"><svg><use href="#mark"/></svg></span><svg class="tk"><use href="#tick"/></svg><b>0</b><span>planar holes detected</span></div>
                    <div class="drow"><span class="cb on"><svg><use href="#mark"/></svg></span><svg class="tk"><use href="#tick"/></svg><b>1</b><span>shells detected</span></div>
                    <div class="drow ind"><span></span><svg class="tk"><use href="#tick"/></svg><b>0</b><span>possible noise shells detected</span></div>
                    <div class="drow"><span class="cb"></span><i class="dot"></i><b></b><span>overlapping triangles detected</span></div>
                    <div class="drow"><span class="cb"></span><i class="dot"></i><b></b><span>intersecting triangles detected</span></div>
                  </div>
                  <div class="updrow"><span class="dbtn update"><svg class="btni"><use href="#d-mag"/></svg>Update</span></div>
                </fieldset>
              </div>
              <div class="dlg-foot">
                <span class="dbtn follow"><svg class="btni"><use href="#d-arrow"/></svg>Follow Advice</span>
                <span class="dbtn close">Close</span>
                <span class="dbtn help">Help</span>
              </div>
            </div>
          </div>
          <svg class="grip" viewBox="0 0 12 12"><path d="M11 1 1 11M11 5 5 11M11 9 9 11" stroke="#9a9a9a" stroke-width="1.5"/></svg>
        </div>
      </div>
      <div class="ruler">
        <div class="ticks"></div>
        <div class="nums"><span>0</span><span>1</span><span>2</span><span>3</span><span>4</span><span>5</span></div>
        <span class="cm">cm</span>
      </div>
    </div>

    <aside class="side">
      <section class="pane view">
        <header class="ph"><i class="tri down"></i><span>View Pages</span><em></em><svg class="pin" viewBox="0 0 16 14"><path d="M0 7H4M4 1H7V4H15V10H7V13H4Z" fill="#fff" stroke="#111" stroke-width="2"/></svg><b>x</b></header>
        <div class="ptabs pt-view"><span class="on">View</span><span>Multi-Section</span><span>Slices</span><span>Grid</span></div>
        <fieldset class="vis">
          <legend>Visualization</legend>
          <div class="visrows">
            <div class="visrow"><span class="vbtn"><svg class="vi"><use href="#v1"/></svg><i></i></span>Shade&amp;Wire</div>
            <div class="visrow"><span class="vbtn"><svg class="vi"><use href="#v2"/></svg><i></i></span>Bad Edges Visible</div>
            <div class="visrow"><span class="vbtn"><svg class="vi"><use href="#v2"/></svg><i></i></span>Flipped Triangles Visible</div>
          </div>
          <div class="preview"><svg viewBox="0 0 150 145"><path d="M4 34 92 3 142 34 58 72Z" fill="#46a6f6" stroke="#122c44" stroke-width="3"/><path d="M4 34 58 72 62 142 20 112Z" fill="#2481d4" stroke="#122c44" stroke-width="3"/><path d="M58 72 142 34 136 96 62 142Z" fill="#2b8ee6" stroke="#122c44" stroke-width="3"/></svg><i></i></div>
        </fieldset>
      </section>

      <section class="pane part">
        <header class="ph"><i class="tri down"></i><span>Part Pages</span><em></em><svg class="pin" viewBox="0 0 16 14"><path d="M0 7H4M4 1H7V4H15V10H7V13H4Z" fill="#fff" stroke="#111" stroke-width="2"/></svg><b>x</b></header>
        <div class="ptabs pt-part"><span class="on">Part List</span><span>Part Info</span><span>Part Fixing Info</span><span>Build Time Estimation</span><span class="clip">Str</span>
          <span class="tabarrows"><i class="al"></i><i class="ar"></i></span></div>
        <div class="scene-row">
          <span class="scene-combo"><svg class="sc-i" viewBox="0 0 30 28"><rect width="30" height="14" fill="#6d8bb0"/><path d="M0 14H30V24H0Z" fill="#a3a62e"/><path d="M4 8h4v6H4zM12 6h5v8h-5zM21 8h4v6h-4z" fill="#2a5cc0"/><path d="M15 24V28" stroke="#555" stroke-width="2"/></svg>Modeler Scene<i></i></span>
          <span class="nparts">Number of parts:</span><span class="nval">1</span>
        </div>
        <div class="table">
          <div class="thead">
            <span class="th"><svg class="sorter" viewBox="0 0 12 8"><path d="M1 7 6 2 11 7" fill="none" stroke="#555" stroke-width="1.5"/></svg></span><span class="th">Sele</span><span class="th">Visi</span><span class="th">Shad</span><span class="th">Trans</span><span class="th">Col</span><span class="th">Men</span><span class="th">Part Name</span><span class="th">FixInfo</span>
          </div>
          <div class="trow">
            <span class="td num">1</span>
            <span class="td"><span class="cbmini"><svg><use href="#mark"/></svg></span></span>
            <span class="td"><svg class="eye" viewBox="0 0 30 22"><path d="M1 11C8 0 22 0 29 11 22 22 8 22 1 11Z" fill="#8cc6f7"/><circle cx="15" cy="11" r="8" fill="#2489ea"/><circle cx="15" cy="11" r="3" fill="#7abdf5"/></svg></span>
            <span class="td"><svg class="cellic" viewBox="0 0 26 30"><path d="M13 1 25 8V23L13 29 1 23V8Z" fill="#555" stroke="#333"/><path d="M13 1 25 8 13 14 1 8Z" fill="#333"/></svg></span>
            <span class="td"><svg class="cellic" viewBox="0 0 26 30"><path d="M13 1 25 8V23L13 29 1 23V8Z" fill="#c9c9c9" stroke="#888"/><path d="M24 1 3 29" stroke="#ee6a5a" stroke-width="2"/></svg></span>
            <span class="td"><svg class="cellic" viewBox="0 0 26 30"><path d="M8 1H18L25 9V21L18 29H8L1 21V9Z" fill="#888" stroke="#111" stroke-width="2"/></svg></span>
            <span class="td"><svg class="cellic" viewBox="0 0 26 30"><path d="M13 1 25 8V23L13 29 1 23V8ZM1 8 13 14 25 8M13 14V29" fill="#fff" stroke="#aaa" stroke-width="1.5"/></svg></span>
            <span class="td name">25-stl</span>
            <span class="td fix"><svg class="fixtk"><use href="#tick2"/></svg></span>
          </div>
        </div>
        <div class="partbar">
          <svg class="pi"><use href="#p1"/></svg><svg class="pi"><use href="#p2"/></svg><svg class="pi"><use href="#p3"/></svg><svg class="pi"><use href="#p4"/></svg><svg class="pi"><use href="#p5"/></svg><svg class="pi"><use href="#p6"/></svg><svg class="pi"><use href="#p7"/></svg><svg class="pi"><use href="#p8"/></svg><svg class="pi"><use href="#p9"/></svg><svg class="pi"><use href="#p10"/></svg><svg class="pi"><use href="#p11"/></svg>
        </div>
      </section>

      <section class="pane col">
        <header class="ph"><i class="tri right"></i><span>Annotation Pages</span><em></em><b>x</b></header>
        <div class="ptabs pt-anno"><span class="on">Text</span><span>Drawing</span><span>Attachments</span><span>Textures</span><span>Simulation</span></div>
      </section>
      <section class="pane col">
        <header class="ph"><i class="tri right"></i><span>Measurement Pages</span><em></em><b>x</b></header>
        <div class="ptabs pt-meas"><span class="on">Distance</span><span>Circle</span><span>Angle</span><span>Info</span><span>Final Part</span><span>Report</span></div>
      </section>
      <section class="pane col">
        <header class="ph"><i class="tri right"></i><span>Fix Pages</span><em></em><b>x</b></header>
        <div class="ptabs pt-fix"><span class="on">Autofix</span><span>Basic</span><span>Hole</span><span>Triangle</span><span>Shell</span><span>Overlap</span><span>Point</span></div>
      </section>
    </aside>
  </div>

  <footer class="status">Ready</footer>
  <div class="strip"></div>
</div>
</body>
</html>
```
FILE: styles.css
```css
* { box-sizing: border-box; }
html, body { margin: 0; padding: 0; background: #fff; }
body { width: 3508px; height: 2480px; overflow: hidden; font-family: Roboto, "Liberation Sans", sans-serif; font-size: 21px; color: #111; }
.sprite { position: absolute; width: 0; height: 0; overflow: hidden; }
svg { display: block; }
.app { padding-top: 198px; width: 3508px; }

/* title bar */
.titlebar { display: flex; height: 48px; position: relative; }
.qat { display: grid; grid-template-columns: 43px 38px 42px 42px 53px 43px 43px 51px 37px 22px 36px 28px 47px 43px 41px 42px 53px 37px 363px; padding-left: 15px; height: 40px; align-items: center; }
.qi { display: flex; align-items: center; height: 40px; }
.qi.sep { background: linear-gradient(#dedede, #dedede) no-repeat right 10px center / 2px 32px; }
.ic { width: 30px; height: 30px; }
.qi:first-child .ic { width: 26px; }
.qi:nth-child(2) .ic { width: 23px; }
.hot { width: 42px; height: 40px; background: #8fc4f2; display: flex; align-items: center; justify-content: center; }
.dd { display: block; width: 0; height: 0; border: 5px solid transparent; border-top: 7px solid #aaa; border-bottom: 0; }
.dd-blue { border-top-color: #2d7ad6; }
.search { height: 36px; margin-top: 3px; border: 2px solid #a9a9a9; color: #7a7a7a; padding: 4px 0 0 3px; font-size: 21px; background: #fff; display: block; }
.apptitle { position: absolute; left: 1595px; top: 12px; font-size: 20.5px; }
.winbtns { position: absolute; left: 3334px; top: 4px; display: flex; align-items: flex-start; }
.w-min { width: 12px; height: 3px; background: #666; margin-top: 17px; }
.w-res { position: relative; width: 16px; height: 24px; margin-left: 55px; }
.w-res i { position: absolute; right: 0; top: 0; width: 12px; height: 18px; border: 2px solid #666; }
.w-res b { position: absolute; left: 0; bottom: 0; width: 12px; height: 16px; border: 2px solid #666; background: #fff; }
.w-x { margin-left: 48px; font-size: 24px; line-height: 24px; color: #333; font-family: "Liberation Sans", sans-serif; }

/* tabs */
.tabs { display: grid; grid-template-columns: 94px 110px 66px 123px 131px 229px 258px 228px 126px 78px 224px 1fr; height: 42px; padding-left: 1px; position: relative; z-index: 1; }
.tab { display: flex; align-items: center; justify-content: center; font-size: 20px; height: 42px; padding-top: 4px; }
.tab.file { background: #2b92f4; color: #fff; }
.tab.active { background: #fff; color: #2e7fd4; border: 2px solid #d5d5d5; border-bottom: 0; height: 44px; }
.tabtools { display: flex; justify-content: flex-end; align-items: flex-start; gap: 10px; padding-right: 14px; }
.winset { display: block; width: 41px; height: 44px; }
.winset svg { width: 41px; height: 44px; }
.collapse { width: 18px; height: 20px; margin-top: 10px; }

/* ribbon */
.ribbon { display: flex; height: 167px; width: 3505px; border: 2px solid #dcdcdc; border-bottom-width: 3px; border-left-color: #ececec; background: #fff; }
.rg { display: flex; flex-direction: column; border-right: 2px solid #e2e2e2; margin: 4px 0 6px; }
.g4 { border-right: 0; }
.g1 { width: 327px; } .g2 { width: 1037px; } .g3 { width: 715px; } .g4 { width: 592px; }
.rg-body { display: flex; height: 130px; }
.rg-label { text-align: center; font-size: 20px; line-height: 24px; padding-left: 5px; }
.bigs { display: grid; }
.g1 .bigs { grid-template-columns: 80px 94px 124px; padding-left: 16px; }
.g2b { grid-template-columns: 94px 114px 76px 78px; padding-left: 12px; width: 377px; }
.g3 .bigs { grid-template-columns: 106px 68px 104px 82px 112px 108px 124px; padding-left: 7px; }
.g4 .bigs { grid-template-columns: 116px 120px 122px 110px 92px; padding-left: 10px; }
.big { display: flex; flex-direction: column; align-items: center; text-align: center; font-size: 20px; line-height: 24px; padding-top: 6px; }
.bi { width: 56px; height: 60px; margin-bottom: 7px; }
.big span { white-space: nowrap; }
.smalls { border-left: 2px solid #e6e6e6; display: flex; flex-direction: column; height: 124px; padding-top: 4px; }
.s-a { width: 281px; padding-left: 23px; }
.s-b { padding-left: 25px; font-size: 21px; }
.small { display: flex; align-items: center; gap: 7px; height: 40.5px; white-space: nowrap; font-size: 20px; }
.s-b .small { font-size: 21px; }
.si { width: 39px; height: 40px; }

/* main */
.main { display: flex; height: 1605px; }
.center { width: 2718px; display: flex; flex-direction: column; }
.toolbar { display: grid; grid-template-columns: 57px 58px 57px 66px 60px 58px 61px 59px 58px 54px 55px 69px 59px 58px 63px 47px 54px 69px 60px 55px 63px 69px 48px 57px 58px 72px 63px 54px 50px 40px; height: 65px; padding: 12px 0 0 27px;
  background:
    radial-gradient(circle, #333 1.5px, transparent 2px) 7px 12px / 4px 7px repeat-y,
    linear-gradient(#e2e2e2,#e2e2e2) 250px 12px / 2px 44px no-repeat,
    linear-gradient(#e2e2e2,#e2e2e2) 430px 12px / 2px 44px no-repeat,
    linear-gradient(#e2e2e2,#e2e2e2) 723px 12px / 2px 44px no-repeat,
    linear-gradient(#e2e2e2,#e2e2e2) 1073px 12px / 2px 44px no-repeat,
    linear-gradient(#e2e2e2,#e2e2e2) 1314px 12px / 2px 44px no-repeat,
    linear-gradient(#e2e2e2,#e2e2e2) 1548px 12px / 2px 44px no-repeat,
    #fff;
}
.ti { width: 38px; height: 44px; }
.tc { position: relative; display: block; width: 38px; height: 44px; }
.tc .ti:last-child:not(:first-child) { position: absolute; left: 4px; top: 0; }
.tc .ti:first-child { width: 34px; }
.viewport { position: relative; height: 1474px; background: #bbdefb; }
.scene { position: absolute; left: 0; top: 0; width: 2718px; height: 1474px; }
.beads { fill: none; stroke-linecap: round; }
.bd { stroke: #454545; stroke-width: 18px; stroke-dasharray: 0 27px; }
.bl { stroke: #909090; stroke-width: 14px; stroke-dasharray: 0 27px; }
.bs { stroke-dashoffset: 13px; }
.b-out .bd { stroke-width: 13px; stroke-dasharray: 0 40px; }
.b-out .bl { stroke: #7c7c7c; stroke-width: 10px; stroke-dasharray: 0 40px; }
.ax { font: 24px "Liberation Sans", sans-serif; }
.ax2 { font: 24px "Liberation Sans", sans-serif; }
.ax-z { fill: #1b5fe6; } .ax-y { fill: #63c812; } .ax-x { fill: #e2141c; }
.wcs { font: 25px "Liberation Sans", sans-serif; fill: #2a2a2a; text-anchor: middle; }

/* dialog */
.dialog { position: absolute; left: 204px; top: 111px; width: 1122px; height: 1035px; background: #f0f0f0; border: 2px solid #8b9eaf; box-shadow: 8px 8px 14px rgba(50, 80, 110, .35); display: flex; flex-direction: column; }
.dlg-title { display: flex; align-items: center; height: 54px; background: #fff; padding-left: 15px; flex: none; }
.dlg-cross { width: 26px; height: 26px; margin-right: 11px; }
.dlg-name { color: #999; font-size: 21.4px; }
.d-min { width: 18px; height: 2px; background: #8a8a8a; margin-left: auto; }
.d-max { width: 16px; height: 17px; border: 2px solid #eee; margin-left: 65px; }
.d-x { width: 20px; height: 20px; margin: 0 31px 0 66px; }
.dlg-body { display: flex; flex: 1; padding: 7px 8px 6px 6px; gap: 16px; min-height: 0; }
.steps { width: 220px; flex: none; height: 964px; background: #fff; border: 2px solid #8a8a8a; outline: 2px solid #9c9c9c; outline-offset: -6px; padding: 6px 9px 0 10px; }
.step { display: flex; align-items: center; height: 38px; font-size: 21px; gap: 2px; }
.sti { width: 36px; height: 38px; flex: none; }
.step span { flex: 1; height: 35px; line-height: 35px; padding-left: 4px; }
.step.sel span { background: #f0f0f0; }
.stepsep { border: 0; border-top: 2px solid #8a8a8a; margin: 17px 0 19px -4px; }
.stepsep.s2 { margin: 19px 0 19px -4px; }
.step .pr { width: 24px; height: 36px; margin: 0 4px 0 8px; }
.dlg-main { flex: 1; display: flex; flex-direction: column; min-width: 0; font-family: "DejaVu Sans", sans-serif; font-stretch: condensed; font-size: 20.5px; }
.partrow { display: flex; height: 41px; align-items: flex-start; margin-bottom: 17px; }
.partlabel { width: 140px; font-family: Roboto, sans-serif; font-size: 21px; padding-left: 3px; }
.partcombo { display: flex; justify-content: space-between; align-items: center; width: 638px; height: 37px; background: #e0e0e0; border: 2px solid #a7a7a7; padding: 0 8px 0 4px; font-size: 20px; }
.partcombo svg { width: 16px; height: 10px; }
.nextbtn { margin: 1px 0 0 10px; width: 80px; height: 40px; background: #c9c9c9; color: #848484; border: 2px solid #c0c0c0; display: flex; align-items: center; justify-content: center; font-family: Roboto, sans-serif; }
.panel { width: 862px; height: 696px; background: linear-gradient(#fff, #f6f6f6); border: 2px solid #a0a0a0; border-right-color: #b5b5b5; border-radius: 4px; padding: 36px 16px 0; }
.box { margin: 0; border: 2px solid #e4e4e4; padding: 0; position: relative; }
.box legend { margin-left: 8px; padding: 0 6px; font-size: 20px; line-height: 22px; font-family: Roboto, sans-serif; }
.advice { height: 136px; }
.advice p { margin: 0; padding: 14px 0 0 22px; line-height: 24px; font-size: 20.5px; }
.vscroll { position: absolute; right: 17px; top: 14px; width: 28px; height: 84px; background: #f0f0f0; display: flex; flex-direction: column; justify-content: space-between; align-items: center; padding: 12px 0; }
.vscroll svg { width: 14px; height: 10px; }
.diag { margin-top: 10px; height: 492px; }
.full { display: flex; align-items: center; gap: 6px; margin: 16px 0 0 17px; height: 24px; font-family: Roboto, sans-serif; font-size: 20px; }
.cb { display: block; width: 23px; height: 23px; border: 2px solid #444; background: #fff; }
.cb svg { width: 19px; height: 19px; }
.rows { margin: 23px 0 0 54px; }
.drow { display: grid; grid-template-columns: 35px 38px 82px auto; align-items: center; height: 36.7px; font-size: 20.5px; }
.drow.ind { padding-left: 36px; grid-template-columns: 35px 37px 82px auto; }
.tk { width: 30px; height: 32px; }
.drow b { font-size: 18px; }
.dot { display: block; width: 7px; height: 7px; border-radius: 50%; background: #1414e0; margin-left: 12px; }
.updrow { display: flex; justify-content: flex-end; margin: 18px 17px 0 0; }
.dbtn { display: flex; align-items: center; justify-content: center; background: #e3e3e3; border: 2px solid #bcbcbc; height: 44px; font-family: Roboto, sans-serif; font-size: 20px; position: relative; }
.update { width: 204px; padding-left: 14px; }
.btni { position: absolute; left: 6px; top: 6px; width: 38px; height: 30px; }
.dlg-foot { display: flex; gap: 12px; margin-top: 166px; padding-left: 331px; }
.follow { width: 272px; padding-left: 26px; }
.close { width: 105px; }
.help { width: 108px; }
.grip { position: absolute; right: 2px; bottom: 2px; width: 14px; height: 14px; }

/* ruler */
.ruler { position: relative; height: 66px; background: linear-gradient(#e8f5ff, #bddefa); border-top: 3px solid #7d7d7d; flex: none; }
.ticks { height: 24px; width: 2610px; background:
    repeating-linear-gradient(90deg, #777 0 2px, transparent 2px 446px) 0 0 / 100% 24px no-repeat,
    repeating-linear-gradient(90deg, #777 0 2px, transparent 2px 223px) 0 0 / 100% 15px no-repeat,
    repeating-linear-gradient(90deg, #777 0 2px, transparent 2px 44.6px) 0 0 / 100% 8px no-repeat; }
.nums { display: flex; margin-top: 6px; font-size: 24px; line-height: 28px; padding-left: 4px; }
.nums span { flex: 0 0 446px; transform: scaleX(.72); transform-origin: 0 50%; }
.nums span:first-child { flex-basis: 435px; }
.cm { position: absolute; left: 2663px; top: 21px; font: 23px "Liberation Sans", sans-serif; color: #222; }

/* right side */
.side { width: 790px; background: #fff; display: flex; flex-direction: column; padding-left: 9px; position: relative; top: 3px; height: 1602px; }
.pane { border-left: 2px solid #ececec; padding-left: 5px; }
.pane + .pane { border-top: 6px solid #f1f1f1; }
.pane.view { height: 317px; border-top: 2px solid #eee; }
.pane.part { height: 1028px; }
.pane.col { height: 86px; }
.ph { display: flex; align-items: center; height: 44px; padding-left: 5px; }
.pane + .pane .ph { height: 36px; margin-bottom: 8px; }
.tri { display: block; width: 0; height: 0; flex: none; }
.tri.down { border-left: 10px solid transparent; border-right: 10px solid transparent; border-top: 12px solid #000; margin-right: 20px; }
.tri.right { border-top: 10px solid transparent; border-bottom: 10px solid transparent; border-left: 12px solid #000; margin: 0 24px 0 4px; }
.ph span { font-size: 21px; white-space: nowrap; }
.ph em { flex: 1; height: 12px; margin: 0 10px; background: radial-gradient(circle, #666 1px, transparent 1.4px) 0 0 / 4px 4px; }
.ph b { width: 30px; font: bold 20px "Liberation Sans", sans-serif; text-align: center; margin-left: 10px; margin-right: 6px; }
.pin { width: 16px; height: 14px; margin: 0 0 0 4px; }
.ptabs { display: grid; height: 36px; font-size: 21px; position: relative; }
.ptabs span { display: flex; align-items: center; justify-content: center; padding-top: 4px; white-space: nowrap; }
.ptabs .on { border: 2px solid #aaa; border-bottom: 0; padding: 0 8px 0 0; background: #fff; }
.pt-view { grid-template-columns: 148px 164px 154px 150px; height: 40px; border-bottom: 2px solid #e8e8e8; }
.pt-part { grid-template-columns: 113px 122px 189px 244px 24px 40px; height: 35px; }
.pt-part .clip { justify-content: flex-start; }
.tabarrows { gap: 10px; padding: 0 !important; margin-left: 5px; width: 55px; position: absolute; left: 715px; top: -4px; justify-content: flex-end !important; }
.tabarrows i { display: block; width: 28px; height: 36px; position: relative; }
.tabarrows .al { background: #f6f6f6; width: 22px; }
.tabarrows .al::after { content: ""; position: absolute; left: 4px; top: 8px; border: 9px solid transparent; border-left: 0; border-right: 11px solid #999; }
.tabarrows .ar { border: 2px solid #999; background: #fff; }
.tabarrows .ar::after { content: ""; position: absolute; left: 7px; top: 6px; border: 10px solid transparent; border-right: 0; border-left: 12px solid #000; }
.pt-anno { grid-template-columns: 110px 123px 161px 120px 146px; }
.pt-meas { grid-template-columns: 121px 99px 106px 100px 137px 104px; }
.pt-fix { grid-template-columns: 108px 88px 88px 119px 90px 117px 94px; }

.vis { border: 2px solid #e6e6e6; margin: 10px 18px 0 7px; padding: 0; height: 186px; position: relative; display: flex; }
.vis legend { padding: 0 4px; margin-left: 8px; font-size: 20px; line-height: 18px; }
.visrows { width: 100%; padding-top: 14px; }
.visrow { display: flex; align-items: center; height: 51.5px; font-size: 20px; gap: 14px; padding-left: 12px; }
.vbtn { position: relative; display: flex; align-items: center; width: 58px; height: 38px; border: 2px solid #c8c8c8; padding-left: 7px; background: #f6f6f6; }
.vbtn i { position: absolute; right: 5px; top: 14px; border: 4px solid transparent; border-top: 6px solid #666; border-bottom: 0; }
.vi { width: 30px; height: 32px; }
.preview { position: absolute; right: 14px; top: 16px; width: 175px; height: 155px; border: 2px solid #bbb; background: #fff; padding: 4px 4px 4px 8px; }
.preview svg { width: 140px; height: 142px; }
.preview i { position: absolute; right: 4px; top: 70px; border: 4px solid transparent; border-top: 6px solid #666; border-bottom: 0; }

.scene-row { display: flex; align-items: center; height: 36px; margin: 8px 0 0 3px; }
.scene-combo { position: relative; display: flex; align-items: center; width: 568px; height: 36px; border: 2px solid #b4b4b4; font-size: 21px; padding-left: 6px; gap: 6px; }
.sc-i { width: 30px; height: 28px; }
.scene-combo i { position: absolute; right: 9px; top: 15px; border: 5px solid transparent; border-top: 6px solid #777; border-bottom: 0; }
.nparts { margin-left: 13px; font-size: 21px; white-space: nowrap; }
.nval { margin-left: 14px; font-size: 21px; }
.table { margin: 12px 0 0 3px; width: 760px; height: 805px; border: 3px solid #8c95a3; background: #fff; }
.thead, .trow { display: grid; grid-template-columns: 44px 45px 46px 64px 64px 47px 54px 130px 1fr; }
.thead { height: 36px; border-bottom: 2px solid #f0f0f0; }
.th { display: flex; align-items: center; padding-left: 6px; overflow: hidden; white-space: nowrap; border-right: 2px solid #f0f0f0; font-size: 20px; }
.sorter { width: 14px; height: 9px; margin-left: 12px; }
.trow { height: 38px; }
.td { display: flex; align-items: center; justify-content: center; }
.td.num { justify-content: flex-start; padding-left: 8px; color: #2a0a50; }
.td.name { font-size: 21px; padding-right: 30px; }
.td.fix { justify-content: flex-start; padding-left: 4px; }
.cbmini { display: block; width: 22px; height: 24px; border: 2px solid #777; }
.cbmini svg { width: 18px; height: 20px; }
.eye { width: 28px; height: 22px; }
.cellic { width: 26px; height: 30px; }
.fixtk { width: 30px; height: 30px; }
.partbar { display: grid; grid-template-columns: 58px 57px 66px 57px 70px 66px 68px 58px 57px 66px 45px; padding: 22px 0 0 11px; }
.pi { width: 45px; height: 42px; }

/* status */
.status { height: 33px; background: #2394fc; color: #f4f9ff; font-size: 20px; line-height: 37px; padding-left: 11px; overflow: hidden; }
.strip { height: 9px; background: linear-gradient(90deg, #d3e6ee 0 1071px, #eef6f9 1071px 1159px, #d3e6ee 1159px 2300px, #d6dfea 2300px); }
```
